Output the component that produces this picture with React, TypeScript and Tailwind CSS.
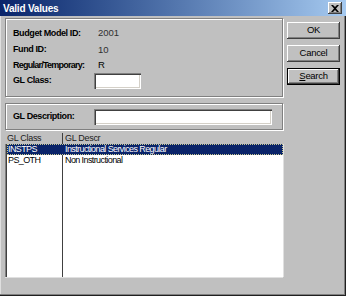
import React from "react";

const raised =
  "shadow-[inset_-1px_-1px_#404040,inset_1px_1px_#ffffff,inset_-2px_-2px_#808080]";
const sunken =
  "shadow-[inset_1px_1px_#808080,inset_2px_2px_#404040,inset_-1px_-1px_#ffffff,inset_-2px_-2px_#d4d0c8]";
const group = "border border-[#808080] shadow-[inset_1px_1px_#ffffff,1px_1px_#ffffff]";

function Btn({ children, def }: { children: React.ReactNode; def?: boolean }) {
  return (
    <div
      className={
        "h-[17px] w-[53px] flex items-center justify-center text-[9.5px] tracking-[-0.3px] text-black bg-[#c0c0c0] " +
        (def ? "border border-black " : "") +
        raised
      }
    >
      {children}
    </div>
  );
}

export default function App() {
  return (
    <div
      className="w-[346px] h-[296px] bg-[#c0c0c0] flex flex-col overflow-hidden shadow-[inset_-1px_-1px_#202020,inset_-2px_-2px_#808080,inset_1px_0_#dfdfdf]"
      style={{ fontFamily: '"Liberation Sans", Arial, sans-serif' }}
    >
      {/* Title bar */}
      <div className="h-[16px] flex items-center justify-between bg-linear-to-r from-[#0a246a] to-[#a6caf0] pl-[3px] pr-[4px]">
        <span className="text-white font-bold text-[10px] tracking-[-0.2px]">Valid Values</span>
        <div className={"w-[14px] h-[12px] bg-[#c0c0c0] flex items-center justify-center " + raised}>
          <svg width="8" height="7" viewBox="0 0 8 7">
            <path d="M0 0h2l2 2 2-2h2L5 3.5 8 7H6L4 5 2 7H0l3-3.5z" fill="#000" />
          </svg>
        </div>
      </div>

      <div className="flex px-[5px] pt-[2px]">
        {/* Left column */}
        <div className="w-[278px] flex flex-col">
          <div className={"h-[79px] pl-[7px] pt-[6px] flex flex-col text-[9.5px] " + group}>
            <div className="h-[17px] flex items-center">
              <span className="w-[81px] font-bold text-[9px] tracking-[-0.4px] whitespace-nowrap">Budget Model ID:</span>
              <span className="pl-[4px] text-[#303030]">2001</span>
            </div>
            <div className="h-[16px] flex items-center">
              <span className="w-[81px] font-bold text-[9px] tracking-[-0.4px]">Fund ID:</span>
              <span className="pl-[4px] text-[#303030]">10</span>
            </div>
            <div className="h-[15px] flex items-center">
              <span className="w-[81px] font-bold text-[9px] tracking-[-0.75px] whitespace-nowrap">Regular/Temporary:</span>
              <span className="pl-[4px]">R</span>
            </div>
            <div className="h-[16px] flex items-center">
              <span className="w-[81px] font-bold text-[9px] tracking-[-0.4px]">GL Class:</span>
              <div className={"w-[47px] h-[16px] bg-white " + sunken} />
            </div>
          </div>

          <div className={"mt-[6px] h-[27px] pl-[7px] flex items-center " + group}>
            <span className="w-[81px] font-bold text-[9px] tracking-[-0.4px]">GL Description:</span>
            <div className={"w-[178px] h-[16px] bg-white " + sunken} />
          </div>

          {/* List header */}
          <div className="mt-[3px] h-[11px] flex items-center text-[9px] tracking-[-0.3px] text-[#202020]">
            <div className="w-[58px] h-full pl-[2px] border-r border-[#404040] flex items-center">GL Class</div>
            <div className="pl-[2px]">GL Descr</div>
          </div>

          {/* List body */}
          <div className="h-[133px] bg-white flex flex-col text-[9px] tracking-[-0.6px] border-l border-[#808080] shadow-[inset_1px_0_#404040,1px_0_#e0e0e0,0_1px_#e0e0e0]">
            <div className="h-[11px] flex items-center bg-[#0a246a] text-white ml-[1px] outline-1 outline-dotted outline-[#c8c890] -outline-offset-1">
              <div className="w-[56px] h-full pl-[1px] border-r border-[#0a246a] flex items-center">INSTPS</div>
              <div className="pl-[2px]">Instructional Services Regular</div>
            </div>
            <div className="h-[11px] flex items-center text-black ml-[1px]">
              <div className="w-[56px] h-full pl-[1px] border-r border-[#404040] flex items-center">PS_OTH</div>
              <div className="pl-[2px]">Non Instructional</div>
            </div>
            <div className="flex-1 flex ml-[1px]">
              <div className="w-[56px] h-full border-r border-[#404040]" />
            </div>
          </div>
        </div>

        {/* Right column */}
        <div className="ml-[4px] pt-[4px] flex flex-col gap-[6px]">
          <Btn>OK</Btn>
          <Btn>Cancel</Btn>
          <Btn def>
            <span>
              <span className="underline">S</span>earch
            </span>
          </Btn>
        </div>
      </div>
    </div>
  );
}
